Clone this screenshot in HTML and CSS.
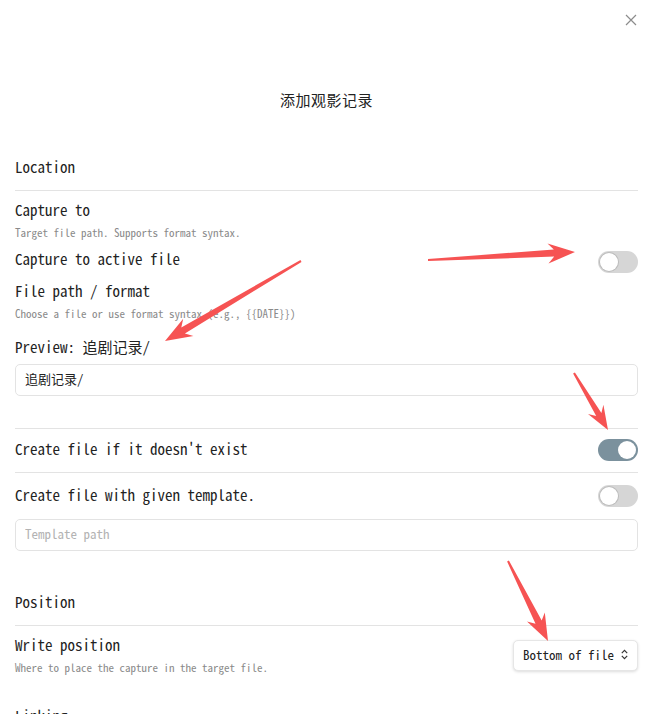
FILE: index.html
```html
<!DOCTYPE html>
<html lang="zh">
  <head>
    <meta charset="UTF-8" />
    <meta name="viewport" content="width=device-width, initial-scale=1.0" />
    <title>添加观影记录</title>
    <link rel="stylesheet" href="styles.css">
  </head>

  <body>
    <div class="modal">
      <button class="modal-close" aria-label="Close">
        <svg viewBox="0 0 12 12" class="close-icon">
          <path d="M1 1l10 10M11 1L1 11" />
        </svg>
      </button>

      <h1 class="modal-title">添加观影记录</h1>

      <!-- LOCATION -->
      <h2 class="section-heading">Location</h2>

      <div class="setting">
        <p class="setting-name">Capture to</p>
        <p class="setting-desc">Target file path. Supports format syntax.</p>
      </div>

      <div class="setting setting--row setting--active">
        <p class="setting-name">Capture to active file</p>
        <span class="toggle"></span>
      </div>

      <div class="setting setting--path">
        <p class="setting-name">File path / format</p>
        <p class="setting-desc">Choose a file or use format syntax (e.g., {{DATE}})</p>
      </div>

      <p class="setting-name preview">Preview: 追剧记录/</p>
      <input class="text-input" type="text" value="追剧记录/" />

      <div class="setting setting--row setting--bordered">
        <p class="setting-name">Create file if it doesn't exist</p>
        <span class="toggle toggle--on"></span>
      </div>

      <div class="setting setting--row setting--template">
        <p class="setting-name">Create file with given template.</p>
        <span class="toggle"></span>
      </div>
      <input class="text-input text-input--template" type="text" placeholder="Template path" />

      <!-- POSITION -->
      <h2 class="section-heading section-heading--position">Position</h2>

      <div class="setting setting--row setting--write">
        <div>
          <p class="setting-name">Write position</p>
          <p class="setting-desc">Where to place the capture in the target file.</p>
        </div>
        <button class="dropdown">
          Bottom of file
          <svg viewBox="0 0 10 14" class="dropdown-icon">
            <path d="M2 5.5l3-3 3 3M2 8.5l3 3 3-3" />
          </svg>
        </button>
      </div>

      <h2 class="section-heading section-heading--linking">Linking</h2>
    </div>

    <!-- annotation arrows drawn over the screenshot -->
    <svg class="annotations" viewBox="0 0 657 714">
      <polygon points="428,261 554.2,256.6 548.5,263.5 575,252 547.5,243.5 553.8,249.6 428,259" />
      <polygon points="300.5,260.1 181.3,327.4 183.2,318.7 165,341 193.4,335.9 184.9,333.4 301.5,261.9" />
      <polygon points="573.1,373.5 596.2,416.1 588,414 608,430 603.4,404.8 601.4,413.1 574.9,372.5" />
      <polygon points="507.1,561.4 535.5,623.8 527,621.4 548,641 544.8,612.4 541.7,620.6 508.9,560.6" />
    </svg>
  </body>
</html>
```

FILE: styles.css
```css
/* MAIN TEXT: #222 */
/* MUTED TEXT: #8a8a8a */
/* ACCENT (toggle on): #7b919d */

* {
  margin: 0;
  padding: 0;
  box-sizing: border-box;
}

body {
  font-family: "Noto Sans Mono CJK SC", "Noto Sans CJK SC", "DejaVu Sans Mono", monospace;
  color: #222;
  background-color: #fff;
  line-height: 1;
  height: 714px;
  overflow: hidden;
}

.modal {
  position: relative;
  padding: 0 19px 0 15px;
}

.modal-close {
  position: absolute;
  top: 14px;
  right: 20px;
  width: 12px;
  height: 12px;
  border: none;
  background: none;
  display: flex;
}
.close-icon {
  width: 12px;
  height: 12px;
  stroke: #8c8c8c;
  stroke-width: 1.2;
  fill: none;
}

.modal-title {
  padding-top: 90px;
  font-family: "Noto Sans CJK SC", sans-serif;
  font-size: 15px;
  font-weight: 400;
  line-height: 20px;
  text-align: center;
  letter-spacing: 0.5px;
}

/* SECTIONS */
.section-heading {
  margin-top: 47px;
  padding-bottom: 13px;
  border-bottom: 1px solid #e3e3e3;
  font-size: 15px;
  font-weight: 400;
  line-height: 20px;
}
.section-heading--position {
  margin-top: 41px;
}
.section-heading--linking {
  margin-top: 31px;
  border-bottom: none;
}

/* SETTINGS */
.setting {
  margin-top: 9px;
}
.setting--row {
  display: flex;
  justify-content: space-between;
  align-items: flex-start;
}
.setting--active {
  margin-top: 9px;
}
.setting--active .toggle {
  margin-top: 2px;
}
.setting--path {
  margin-top: 8px;
}
.setting--bordered {
  margin-top: 32px;
  padding: 10px 0 11px;
  border-top: 1px solid #e3e3e3;
  border-bottom: 1px solid #e3e3e3;
}
.setting--template {
  margin-top: 12px;
}
.setting--write {
  margin-top: 9px;
}

.setting-name {
  font-size: 15px;
  line-height: 20px;
}
.setting-desc {
  margin-top: 4px;
  font-size: 11px;
  line-height: 16px;
  color: #8a8a8a;
}
.preview {
  margin-top: 16px;
}

/* CONTROLS */
.toggle {
  position: relative;
  width: 40px;
  height: 22px;
  border-radius: 11px;
  background-color: #d6d6d6;
  flex-shrink: 0;
}
.toggle::after {
  content: "";
  position: absolute;
  top: 2px;
  left: 2px;
  width: 18px;
  height: 18px;
  border-radius: 50%;
  background-color: #fff;
  box-shadow: 0 0 0 1px rgba(0, 0, 0, 0.12);
}
.toggle--on {
  background-color: #7b919d;
}
.toggle--on::after {
  left: 20px;
  box-shadow: none;
}

.text-input {
  display: block;
  width: 100%;
  height: 32px;
  margin-top: 7px;
  padding: 0 9px 3px;
  border: 1px solid #e3e3e3;
  border-radius: 5px;
  font-family: inherit;
  font-size: 13px;
  color: #222;
  background-color: #fff;
  outline: none;
}
.text-input::placeholder {
  color: #b3b3b3;
}
.text-input--template {
  margin-top: 12px;
}

.dropdown {
  margin-top: 5px;
  width: 125px;
  height: 31px;
  padding: 0 8px 2px 9px;
  border: 1px solid #e6e6e6;
  border-radius: 5px;
  background-color: #fff;
  box-shadow: 0 1px 3px rgba(0, 0, 0, 0.14);
  font-family: inherit;
  font-size: 13px;
  color: #222;

  display: flex;
  align-items: center;
  justify-content: space-between;
}
.dropdown-icon {
  width: 9px;
  height: 13px;
  stroke: #333;
  stroke-width: 1.3;
  fill: none;
}

.annotations {
  position: absolute;
  top: 0;
  left: 0;
  width: 657px;
  height: 714px;
  fill: #f65353;
  pointer-events: none;
}
```
